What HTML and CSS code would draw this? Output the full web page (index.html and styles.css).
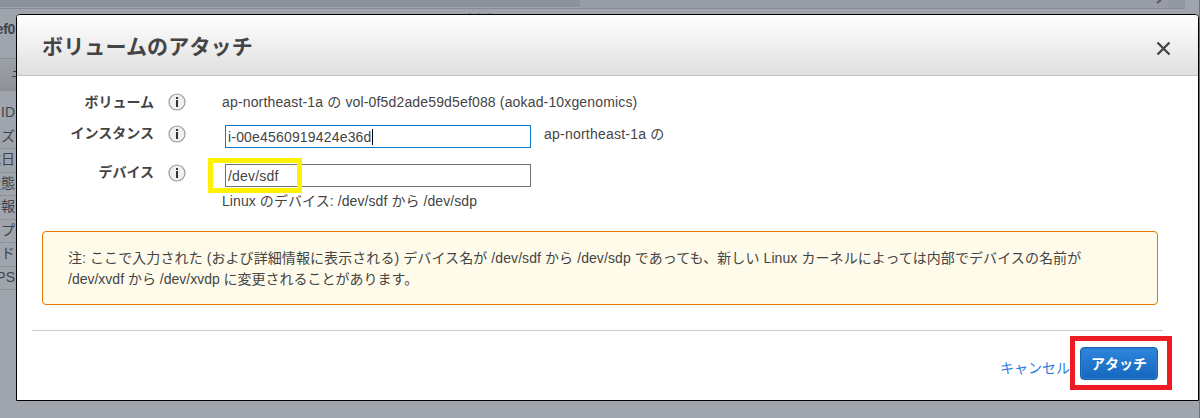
FILE: index.html
```html
<!DOCTYPE html>
<html lang="ja">
<head>
<meta charset="utf-8">
<title>ボリュームのアタッチ</title>
<link rel="stylesheet" href="styles.css">
</head>
<body>
<div class="page">
  <div class="page-scroll"><div class="scroll-thumb"></div><div class="scroll-track"><svg class="scroll-arrow" width="6" height="4" viewBox="0 0 6 4"><path d="M5 0 1 3" stroke="#555a62" stroke-width="2" fill="none"/></svg></div><div class="scroll-end"></div></div>
  <div class="side">
    <div class="side-title">ef0</div>
    <div class="side-tab"><svg width="4" height="8" viewBox="0 0 4 8"><path d="M1 1.5h3M0 6.5h4" stroke="#3f444c" stroke-width="1.2"/></svg></div>
    <ul class="side-list">
      <li>ID</li><li>イズ</li><li>成日</li><li>状態</li><li>情報</li><li>イプ</li><li>ード</li><li>PS</li>
    </ul>
  </div>
  <div class="page-dots"><i></i><i></i><i></i></div>
  <div class="page-edge"></div>
</div>
<div class="modal">
  <header class="modal-header">
    <h1 class="modal-title">ボリュームのアタッチ</h1>
    <svg class="close" width="15" height="15" viewBox="0 0 15 15"><path d="M1.5 1.5 13.5 13.5M13.5 1.5 1.5 13.5" stroke="#444" stroke-width="2.3" fill="none"/></svg>
  </header>
  <div class="form">
    <div class="row row-volume">
      <span class="label">ボリューム</span>
      <svg class="info" width="18" height="18" viewBox="0 0 18 18"><circle cx="9" cy="9" r="8" fill="#f0f0f0" stroke="#999" stroke-width="1.2"/><path d="M8 4h2v2H8zM8 7h2v7H8z" fill="#333"/></svg>
      <span class="value volume-text">ap-northeast-1a の vol-0f5d2ade59d5ef088 (aokad-10xgenomics)</span>
    </div>
    <div class="row row-instance">
      <span class="label">インスタンス</span>
      <svg class="info" width="18" height="18" viewBox="0 0 18 18"><circle cx="9" cy="9" r="8" fill="#f0f0f0" stroke="#999" stroke-width="1.2"/><path d="M8 4h2v2H8zM8 7h2v7H8z" fill="#333"/></svg>
      <div class="field field-focus">i-00e4560919424e36d<span class="caret"></span></div>
      <span class="zone">ap-northeast-1a の</span>
    </div>
    <div class="row row-device">
      <span class="label">デバイス</span>
      <svg class="info" width="18" height="18" viewBox="0 0 18 18"><circle cx="9" cy="9" r="8" fill="#f0f0f0" stroke="#999" stroke-width="1.2"/><path d="M8 4h2v2H8zM8 7h2v7H8z" fill="#333"/></svg>
      <div class="field">/dev/sdf<span class="mark mark-yellow"></span></div>
    </div>
    <div class="hint">Linux のデバイス: /dev/sdf から /dev/sdp</div>
  </div>
  <div class="notice">
    <div class="notice-line line-a">注: ここで入力された (および詳細情報に表示される) デバイス名が /dev/sdf から /dev/sdp であっても、新しい Linux カーネルによっては内部でデバイスの名前が</div>
    <div class="notice-line">/dev/xvdf から /dev/xvdp に変更されることがあります。</div>
  </div>
  <footer class="modal-footer">
    <span class="cancel">キャンセル</span>
    <div class="attach"><span class="attach-text">アタッチ</span><span class="mark mark-red"></span></div>
  </footer>
</div>
</body>
</html>
```
FILE: styles.css
```css
* { box-sizing: border-box; }
body {
  margin: 0;
  width: 1200px;
  height: 418px;
  overflow: hidden;
  position: relative;
  background: #a0a4ac;
  color: #444;
  font: 14px/20px "Liberation Sans", "Noto Sans CJK JP", sans-serif;
  white-space: nowrap;
}

/* dimmed page behind the dialog */
.page { height: 418px; position: relative; color: #3f444c; }
.page-scroll { display: flex; width: 1185px; height: 9px; border-bottom: 1px solid #868a94; }
.scroll-thumb { width: 580px; height: 7px; background: #8d919a; }
.scroll-track { width: 588px; background: #989ca6; }
.scroll-arrow { display: block; margin-left: 576px; }
.scroll-end { flex: 1; background: #9296a0; }
.side { width: 16px; display: flex; flex-direction: column; align-items: flex-end; }
.side-title { margin-top: 10px; padding-right: 1px; font-weight: bold; letter-spacing: -0.3px; }
.side-tab { width: 16px; height: 33px; margin-top: 19px; border-top: 1px solid #888c94; border-bottom: 1px solid #888c94; background: linear-gradient(#9b9fa6, #8f9399); display: flex; justify-content: flex-end; padding-top: 11px; }
.side-list { list-style: none; margin: 11px 0 0; padding: 0; width: 16px; }
.side-list li { height: 23.5px; padding-right: 1px; display: flex; justify-content: flex-end; border-bottom: 1px dashed #888c94; }
.side-list li:first-child { border-bottom-color: transparent; }
.page-dots { position: absolute; left: 468px; top: 13px; display: flex; gap: 7px; }
.page-dots i { width: 3px; height: 1px; background: #858993; }
.page-edge { position: absolute; right: 0; top: 0; width: 1px; height: 418px; background: #70747a; }

/* dialog */
.modal {
  position: absolute;
  left: 16px;
  top: 14px;
  width: 1183px;
  height: 387px;
  border: 1px solid #000;
  border-radius: 4px 4px 0 0;
  background: #fff;
}
.modal-header {
  display: flex;
  justify-content: space-between;
  align-items: center;
  height: 61px;
  padding: 4px 27px 0 25px;
  border-bottom: 1px solid #c4c4c4;
  border-radius: 3px 3px 0 0;
  background: linear-gradient(#fff, #dfdfdf);
}
.modal-title { margin: 0; font-size: 21px; line-height: 30px; font-weight: bold; letter-spacing: 0.15px; }
.close { margin-top: 3px; }
.form { padding-top: 16px; height: 155px; }
.row { display: flex; align-items: flex-start; }
.row-volume { height: 33px; }
.row-instance { height: 39px; }
.row-device { height: 23px; }
.label { width: 137px; text-align: right; font-weight: bold; }
.row-instance .zone { margin-top: -1px; }
.row-instance .label, .row-device .label { margin-top: -2px; }
.info { margin: 1px 0 0 14px; flex: none; }
.row-instance .info, .row-device .info { margin-top: 0; }
.value { margin-left: 36px; }
.volume-text { letter-spacing: 0.155px; }
.field {
  position: relative;
  display: flex;
  align-items: center;
  width: 306px;
  height: 23px;
  margin-left: 39px;
  padding-left: 2px;
  border: 1px solid #707070;
  letter-spacing: 0.18px;
}
.field-focus { border-color: #0f78c8; }
.caret { width: 1px; height: 16px; background: #000; }
.zone { margin-left: 13px; letter-spacing: 0.22px; }
.hint { padding: 4px 0 0 205px; letter-spacing: 0.08px; }
.notice {
  width: 1116px;
  height: 74px;
  margin-left: 25px;
  padding: 16px 25px 14px;
  border: 1px solid #e07b00;
  border-radius: 4px;
  background: #fffbeb;
}
.notice-line { line-height: 21px; }
.line-a { letter-spacing: 0.085px; }
.modal-footer {
  display: flex;
  justify-content: flex-end;
  height: 70px;
  width: 1131px;
  margin: 25px 0 0 15px;
  padding: 16px 5px 0 0;
  border-top: 1px solid #ccc;
}
.cancel { margin: 11px 10px 0 0; color: #2b7de0; }
.attach {
  position: relative;
  display: flex;
  justify-content: center;
  width: 78px;
  height: 33px;
  padding-top: 6px;
  border: 1px solid #1463b4;
  border-radius: 4px;
  background: linear-gradient(#2f85dc, #1467bd);
  box-shadow: inset 0 0 0 1px #2f7bca;
  color: #fff;
  font-weight: bold;
}

/* highlight frames laid over the controls */
.mark { position: absolute; }
.mark-yellow { left: -18px; top: -7px; width: 94px; height: 35px; border: 5px solid #fff200; }
.mark-red { left: -11px; top: -12px; width: 102px; height: 54px; border: 5px solid #ed1c24; }
```
